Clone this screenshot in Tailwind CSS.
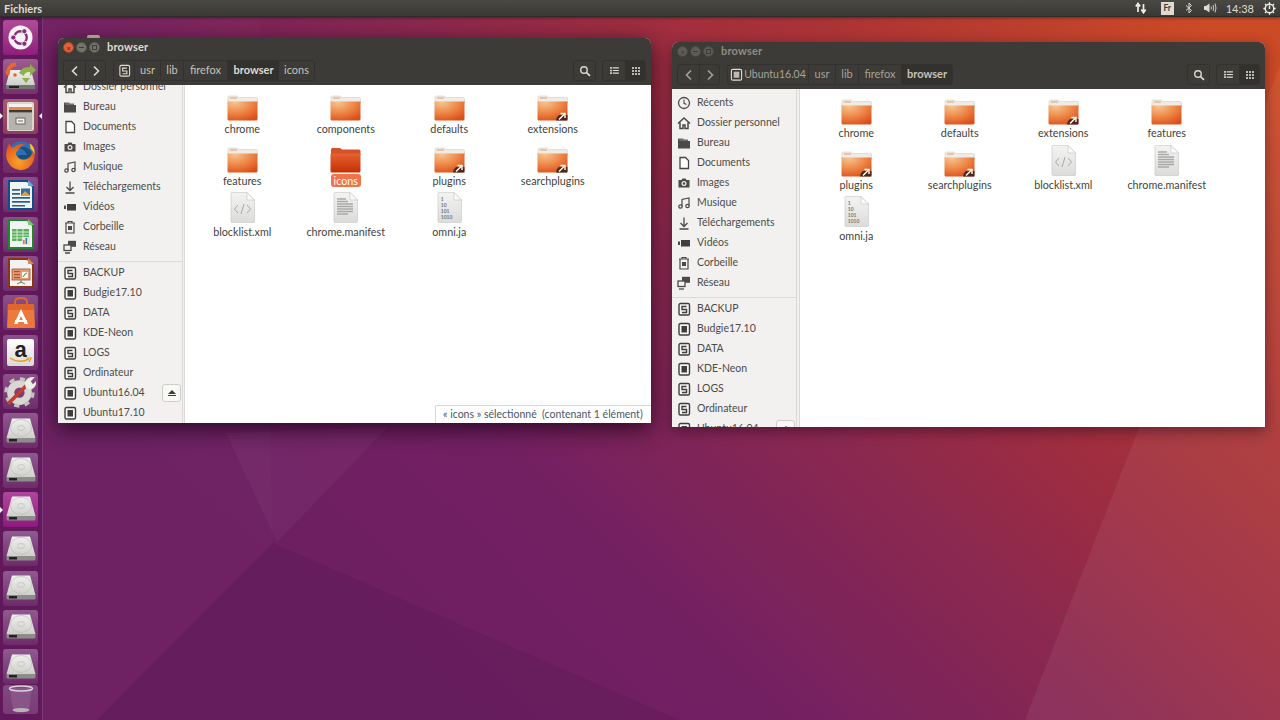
<!DOCTYPE html>
<html lang="fr">
<head>
<meta charset="utf-8">
<title>browser</title>
<script src="https://cdn.jsdelivr.net/npm/@tailwindcss/browser@4"></script>
</head>
<body class="m-0 overflow-hidden">
<svg class="absolute w-0 h-0">
<defs>
<linearGradient id="wp" gradientUnits="userSpaceOnUse" x1="450" y1="760" x2="1180" y2="0">
<stop offset="0" stop-color="#6c1f62"/><stop offset=".25" stop-color="#732062"/><stop offset=".47" stop-color="#8a2850"/><stop offset=".6" stop-color="#9c2c42"/><stop offset=".75" stop-color="#aa3335"/><stop offset="1" stop-color="#cc4a26"/>
</linearGradient>
<radialGradient id="fo" cx=".25" cy=".05" r="1.05"><stop offset="0" stop-color="#f6c48f"/><stop offset=".5" stop-color="#ee8a4a"/><stop offset="1" stop-color="#dc4d18"/></radialGradient>
<linearGradient id="fs" x1="0" y1="0" x2="0" y2="1"><stop offset="0" stop-color="#e5622f"/><stop offset="1" stop-color="#c72f05"/></linearGradient>
<linearGradient id="dk" x1="0" y1="0" x2="0" y2="1"><stop offset="0" stop-color="#f0f0ee"/><stop offset="1" stop-color="#cfcfcc"/></linearGradient>
<linearGradient id="fileg" x1="0" y1="0" x2="0" y2="1"><stop offset="0" stop-color="#f3f3f2"/><stop offset="1" stop-color="#dcdcda"/></linearGradient>
<radialGradient id="ffo" cx=".45" cy=".7" r=".7"><stop offset="0" stop-color="#f9a12a"/><stop offset="1" stop-color="#e2521b"/></radialGradient>

<symbol id="folder" viewBox="0 0 31 26"><path d="M1 2.500Q1 1 2.500 1H10L12 2.500H29Q30.500 2.500 30.500 4V8H1Z" fill="#efece8" stroke="#c9c5c0" stroke-width=".5"/><rect x="3" y="2.500" width="7" height="1" fill="#ef9662"/><path d="M.5 6.500H30.500V24Q30.500 25.500 29 25.500H2Q.5 25.500 .5 24Z" fill="url(#fo)"/></symbol>
<symbol id="folder-sel" viewBox="0 0 31 26"><path d="M1 2.500Q1 1 2.500 1H10L12 2.500H29Q30.500 2.500 30.500 4V8H1Z" fill="#d6512a"/><path d="M.5 6.500H30.500V24Q30.500 25.500 29 25.500H2Q.5 25.500 .5 24Z" fill="url(#fs)"/></symbol>
<symbol id="link" viewBox="0 0 13 10"><path d="M1 9.500Q2 4 5 4H12.500V9.500Z" fill="#2b2520" opacity=".85"/><path d="M4 8.500L9 3.500M5.500 2.500H10V7" stroke="#fff" stroke-width="1.400" fill="none"/></symbol>
<symbol id="file" viewBox="0 0 25 31"><path d="M1 1.500Q1 .5 2 .5H17L24.500 8V29.500Q24.500 30.500 23.500 30.500H2Q1 30.500 1 29.500Z" fill="url(#fileg)" stroke="#c4c4c2" stroke-width=".6"/><path d="M17 .5V8H24.500Z" fill="#fafafa" stroke="#c4c4c2" stroke-width=".6"/></symbol>

<symbol id="i-clock" viewBox="0 0 14 14"><circle cx="7" cy="7" r="5.500" fill="none" stroke="#4a4a48" stroke-width="1.300"/><path d="M7 3.500V7.300L9.500 8.500" fill="none" stroke="#4a4a48" stroke-width="1.100"/></symbol>
<symbol id="i-home" viewBox="0 0 14 14"><path d="M1 7.500L7 2L13 7.500M3 6.500V12.500H6V9H8V12.500H11V6.500" fill="none" stroke="#4a4a48" stroke-width="1.500"/></symbol>
<symbol id="i-folder" viewBox="0 0 14 14"><path d="M1 2.500H6L7 3.500H11V5H1Z" fill="#6f6f6c"/><rect x="2" y="5" width="11" height="7.500" fill="#4a4a48"/><rect x="1" y="3" width="1.200" height="9.500" fill="#4a4a48"/></symbol>
<symbol id="i-doc" viewBox="0 0 14 14"><path d="M3 1.500H8.500L11.500 4.500V12.500H3Z" fill="#fff" stroke="#444" stroke-width="1.300"/></symbol>
<symbol id="i-cam" viewBox="0 0 14 14"><path d="M1.500 4H4.500L5.500 2.500H8.500L9.500 4H12.500V11.500H1.500Z" fill="#4a4a48"/><circle cx="7" cy="7.500" r="2.500" fill="#f2f1f0"/><circle cx="7" cy="7.500" r="1.300" fill="#4a4a48"/></symbol>
<symbol id="i-music" viewBox="0 0 14 14"><path d="M5 10.500V3.500L12 2V9.500" fill="none" stroke="#4a4a48" stroke-width="1.200"/><circle cx="3.500" cy="10.500" r="1.700" fill="none" stroke="#4a4a48" stroke-width="1.200"/><circle cx="10.500" cy="10" r="1.700" fill="none" stroke="#4a4a48" stroke-width="1.200"/></symbol>
<symbol id="i-dl" viewBox="0 0 14 14"><path d="M7 1.500V10M3.500 7L7 10.500L10.500 7M2.500 13H11.500" fill="none" stroke="#4a4a48" stroke-width="1.300"/></symbol>
<symbol id="i-vid" viewBox="0 0 14 14"><rect x="4" y="4" width="9" height="6.500" fill="#3f3f3d"/><path d="M1 5.500H3V9H1Z" fill="#4a4a48"/></symbol>
<symbol id="i-trash" viewBox="0 0 14 14"><path d="M2 3H12M5 3V1.500H9V3M3 3.500V13H11V3.500" fill="none" stroke="#4a4a48" stroke-width="1.200"/><path d="M5 6H9V10H5Z" fill="#4a4a48"/></symbol>
<symbol id="i-net" viewBox="0 0 14 14"><rect x="5" y=".8" width="8" height="6" fill="#4a4a48"/><rect x="1" y="5" width="7" height="5.500" fill="#f2f1f0" stroke="#4a4a48" stroke-width="1.300"/><path d="M2 13H7" stroke="#4a4a48" stroke-width="1.300"/></symbol>
<symbol id="d-s" viewBox="0 0 14 14"><rect x="2" y="1.500" width="10.500" height="11.500" rx="1.500" fill="#f6f6f5" stroke="#3e3e3c" stroke-width="1.400"/><path d="M9.500 4.500H5V7.500H9.500V10.500H5" fill="none" stroke="#3e3e3c" stroke-width="1.400"/></symbol>
<symbol id="d-f" viewBox="0 0 14 14"><rect x="2" y="1.500" width="10.500" height="11.500" rx="1.500" fill="#f6f6f5" stroke="#3e3e3c" stroke-width="1.400"/><rect x="4.500" y="4" width="5.500" height="6.500" fill="#3e3e3c"/></symbol>
<symbol id="t-disk" viewBox="0 0 14 14"><rect x="2" y="1.500" width="10.500" height="11.500" rx="1.500" fill="none" stroke="#dfdbd2" stroke-width="1.200"/><path d="M9.500 4.500H5V7.500H9.500V10.500H5" fill="none" stroke="#dfdbd2" stroke-width="1.200"/></symbol>
<symbol id="t-diskf" viewBox="0 0 14 14"><rect x="1.500" y="1.500" width="11" height="11.500" rx="1.500" fill="none" stroke="#dfdbd2" stroke-width="1.200"/><rect x="4" y="4" width="6" height="6.500" fill="#bdb9b1"/></symbol>
<symbol id="t-back" viewBox="0 0 10 12"><path d="M7 1.500L2.500 6L7 10.500" fill="none" stroke="currentColor" stroke-width="1.600"/></symbol>
<symbol id="t-fwd" viewBox="0 0 10 12"><path d="M3 1.500L7.500 6L3 10.500" fill="none" stroke="currentColor" stroke-width="1.600"/></symbol>
<symbol id="t-search" viewBox="0 0 14 14"><circle cx="5.800" cy="5.800" r="3.800" fill="none" stroke="#dfdbd2" stroke-width="1.600"/><path d="M8.800 8.800L12.800 12.800" stroke="#dfdbd2" stroke-width="2"/></symbol>
<symbol id="t-list" viewBox="0 0 10 8"><path d="M0 0H2V2H0ZM3 .3H10V1.700H3ZM0 3H2V5H0ZM3 3.300H10V4.700H3ZM0 6H2V8H0ZM3 6.300H10V7.700H3Z" fill="#dfdbd2"/></symbol>
<symbol id="t-grid" viewBox="0 0 8 8"><path d="M0 0H2V2H0ZM3 0H5V2H3ZM6 0H8V2H6ZM0 3H2V5H0ZM3 3H5V5H3ZM6 3H8V5H6ZM0 6H2V8H0ZM3 6H5V8H3ZM6 6H8V8H6Z" fill="#bdb9b1"/></symbol>

<symbol id="drive" viewBox="0 0 32 32"><path d="M7 3.500H25L30.500 23H1.500Z" fill="url(#dk)"/><ellipse cx="16" cy="13" rx="10.500" ry="8.500" fill="none" stroke="#bdbdb9" stroke-width=".7"/><ellipse cx="16" cy="13" rx="3.500" ry="2.500" fill="none" stroke="#bdbdb9" stroke-width=".7"/><path d="M1.500 23H30.500V26Q30.500 27.500 29 27.500H3Q1.500 27.500 1.500 26Z" fill="#8d8d8a"/><rect x="4" y="24" width="8" height="2.500" fill="#222"/></symbol>
</defs>
</svg>

<div class="relative w-[1280px] h-[720px] overflow-hidden bg-[#6c1f62] font-['Lato',sans-serif]">
  <!-- wallpaper -->
  <svg class="absolute inset-0 w-[1280px] h-[720px]" viewBox="0 0 1280 720">
    <rect width="1280" height="720" fill="url(#wp)"/>
    <polygon points="1299,17 1280,17 1280,720 1025,720" fill="#ffffff" opacity=".06"/>
    <polygon points="273,543 97,720 680,720" fill="#3f1040" opacity=".13"/>
    <polygon points="226,433 388,427 277,542" fill="#ffffff" opacity=".035"/>
    <polygon points="43,17 260,17 273,543 97,720 43,720" fill="#ffffff" opacity=".015"/>
  </svg>
  <div class="absolute left-[87px] top-[35px] w-[13px] h-[5px] bg-[#cdbfae] rounded-t-[2px]"></div>

  <div class="relative flex flex-col h-[720px]">
    <!-- top bar -->
    <header class="h-[17px] shrink-0 flex items-center bg-linear-to-b from-[#4a4843] to-[#3a3935] text-[#dfdbd2] border-b border-[#2d2c29] shadow-[0_1px_3px_rgba(0,0,0,.4)] z-10">
      <span class="ml-1 text-[11px] leading-none font-bold">Fichiers</span>
      <div class="ml-auto flex items-center">
        <svg class="w-[12px] h-[12px] mr-[14px]" viewBox="0 0 12 12"><path d="M3 10V3M.8 4.500L3 1.500L5.200 4.500" stroke="#f0ede6" stroke-width="1.700" fill="none"/><path d="M8.500 2V10M6.300 7.500L8.500 10.700L10.700 7.500" stroke="#f0ede6" stroke-width="1.700" fill="none"/></svg>
        <span class="w-[13px] h-[13px] mr-[11px] bg-[#dcdad3] text-[#3c3b37] text-[8.500px] font-bold leading-[13px] text-center">Fr</span>
        <svg class="w-[8px] h-[12px] mr-[10px]" viewBox="0 0 8 12"><path d="M1 3.500L6.500 8.500L4 11V1L6.500 3.500L1 8.500" fill="none" stroke="#dfdbd2" stroke-width="1"/></svg>
        <svg class="w-[14px] h-[12px] mr-[9px]" viewBox="0 0 14 12"><path d="M1 4H3L6.500 1.500V10.500L3 8H1Z" fill="#dfdbd2"/><path d="M8 4.500Q9 6 8 7.500M10 3Q11.500 6 10 9M12 1.500Q14 6 12 10.500" fill="none" stroke="#dfdbd2" stroke-width=".9"/></svg>
        <span class="mr-[9px] text-[11px] leading-none">14:38</span>
        <svg class="w-[13px] h-[13px] mr-[4px]" viewBox="0 0 13 13"><circle cx="6.500" cy="6.500" r="4.300" fill="none" stroke="#f0ede6" stroke-width="1.500"/><path d="M6.500 3.500V7" stroke="#f0ede6" stroke-width="1.400"/><path d="M6.500 .3V2M6.500 11V12.700M.3 6.500H2M11 6.500H12.700M2 2L3.200 3.200M9.800 9.800L11 11M11 2L9.800 3.200M3.200 9.800L2 11" stroke="#f0ede6" stroke-width="1.300"/></svg>
      </div>
    </header>

    <div class="flex flex-1 min-h-0">
      <!-- launcher -->
      <nav class="relative w-[43px] shrink-0 bg-[#62195c] border-r border-[#7a3a78] flex flex-col items-center gap-[4.330px] pt-[3px] pr-[1px]">
        <div class="w-[35px] h-[35px] rounded-[3px] flex items-center justify-center bg-linear-to-b from-[#b04c98] to-[#8e1e7c]">
          <svg class="w-[25px] h-[25px]" viewBox="0 0 26 26"><circle cx="13" cy="13" r="12.500" fill="#f6f2f5"/><circle cx="13" cy="13" r="6.500" fill="none" stroke="#8c2a78" stroke-width="2.400"/><circle cx="5.500" cy="13" r="2.700" fill="#8c2a78" stroke="#f6f2f5"/><circle cx="17" cy="6.500" r="2.700" fill="#8c2a78" stroke="#f6f2f5"/><circle cx="17" cy="19.500" r="2.700" fill="#8c2a78" stroke="#f6f2f5"/></svg>
        </div>
        <div class="w-[35px] h-[35px] rounded-[3px] flex items-center justify-center bg-linear-to-b from-[#9a5f8f] to-[#7b2f70]">
          <svg class="w-[33px] h-[33px]" viewBox="0 0 33 33"><path d="M6 10H27L31 25H2Z" fill="url(#dk)"/><path d="M2 25H31V29H2Z" fill="#77756f"/><rect x="5" y="26" width="10" height="2" fill="#222"/><path d="M12 4Q3 6 4 15" fill="none" stroke="#e8682c" stroke-width="3.500"/><circle cx="8" cy="5" r="2" fill="#e8682c"/><circle cx="3" cy="12" r="1.800" fill="#e8682c"/><circle cx="11" cy="15" r="1.800" fill="#e8682c"/><path d="M15 13Q18 6 26 7V4L32 10L26 16V12Q20 12 20 16Z" fill="#8fb04a"/><path d="M18 18H26L22 23Z" fill="#8fb04a"/></svg>
        </div>
        <div class="w-[35px] h-[35px] rounded-[3px] flex items-center justify-center bg-linear-to-b from-[#a55e6d] to-[#8e3f56]">
          <svg class="w-[29px] h-[31px]" viewBox="0 0 29 31"><rect x="1" y="1" width="27" height="29" rx="2" fill="#d9d8d3"/><rect x="3" y="3" width="23" height="3" fill="#f3f2ee"/><rect x="3" y="6" width="23" height="3" fill="#e88a48"/><rect x="3" y="9" width="23" height="2.500" fill="#3e3a36"/><rect x="3" y="12" width="23" height="17" fill="#b4b3ae"/><rect x="10" y="17" width="9" height="6" fill="#f2f1ee" stroke="#6a6964"/><rect x="12" y="19.500" width="5" height="1" fill="#6a6964"/></svg>
        </div>
        <div class="w-[35px] h-[35px] rounded-[3px] flex items-center justify-center bg-linear-to-b from-[#7e4076] to-[#6f2a68]">
          <svg class="w-[33px] h-[33px]" viewBox="0 0 31 31"><circle cx="16" cy="14" r="12" fill="#2d6fb4"/><path d="M15 8Q22 6 26 13Q25 20 18 19Q13 19 13 15H22Q20 11 15 8Z" fill="#17507f"/><path d="M5 4Q6 8 9 8Q13 4 20 5Q14 7 13 11Q10 13 12 16Q15 21 21 19Q26 17 28 10Q31 20 23 27Q15 32 7 26Q-2 17 5 4Z" fill="url(#ffo)"/><path d="M24 4Q29 7 29 14L25 9Z" fill="#f7c02c"/></svg>
        </div>
        <div class="w-[35px] h-[35px] rounded-[3px] flex items-center justify-center bg-linear-to-b from-[#8b4f8a] to-[#6f2f6e]">
          <svg class="w-[28px] h-[32px]" viewBox="0 0 28 32"><path d="M1 1H21L27 7V31H1Z" fill="#0f4f8b"/><path d="M3 3H20L25 8V29H3Z" fill="#f2f3f3"/><path d="M21 1L27 7H21Z" fill="#6aa7d6"/><rect x="5" y="10" width="8" height="1.700" fill="#245d93"/><rect x="5" y="14" width="8" height="1.700" fill="#245d93"/><rect x="5" y="18" width="18" height="1.700" fill="#245d93"/><rect x="5" y="22" width="18" height="1.700" fill="#245d93"/><rect x="5" y="26" width="13" height="1.500" fill="#245d93"/><rect x="14" y="9.500" width="9" height="7" fill="#356f9e"/><path d="M14 16.500L18 12L23 16.500Z" fill="#d8a04c"/></svg>
        </div>
        <div class="w-[35px] h-[35px] rounded-[3px] flex items-center justify-center bg-linear-to-b from-[#8b4f8a] to-[#6f2f6e]">
          <svg class="w-[28px] h-[32px]" viewBox="0 0 28 32"><path d="M1 1H21L27 7V31H1Z" fill="#1c8a2c"/><path d="M3 3H20L25 8V29H3Z" fill="#f2f3f3"/><path d="M21 1L27 7H21Z" fill="#79c96d"/><rect x="5" y="11" width="17" height="12" fill="#57b25a"/><path d="M5 14H22M5 17H22M5 20H22M10 11V23M16 11V23" stroke="#eef7ee" stroke-width=".8"/><rect x="15" y="19" width="8" height="8" fill="#e7e4de"/><rect x="16" y="22" width="1.600" height="4" fill="#d9823a"/><rect x="18.500" y="20" width="1.600" height="6" fill="#3f79b4"/></svg>
        </div>
        <div class="w-[35px] h-[35px] rounded-[3px] flex items-center justify-center bg-linear-to-b from-[#8b4f8a] to-[#6f2f6e]">
          <svg class="w-[28px] h-[32px]" viewBox="0 0 28 32"><path d="M1 1H21L27 7V31H1Z" fill="#8c3515"/><path d="M3 3H20L25 8V29H3Z" fill="#f2f3f3"/><path d="M21 1L27 7H21Z" fill="#d9875b"/><rect x="5" y="12" width="18" height="11" fill="#e89a76" stroke="#a5542c" stroke-width=".8"/><rect x="7" y="14" width="6" height="1.200" fill="#a5542c"/><rect x="7" y="17" width="6" height="1.200" fill="#a5542c"/><rect x="7" y="20" width="6" height="1.200" fill="#a5542c"/><rect x="15" y="15" width="6" height="6" fill="#f5f5f2"/><path d="M16 20L18 17L20 16" stroke="#3c9a44" fill="none"/><path d="M14 23V26M10 27L14 25L18 27" stroke="#777" fill="none"/></svg>
        </div>
        <div class="w-[35px] h-[35px] rounded-[3px] flex items-center justify-center bg-linear-to-b from-[#8b4f8a] to-[#6f2f6e]">
          <svg class="w-[30px] h-[32px]" viewBox="0 0 30 32"><path d="M9 9V5Q9 1 15 1Q21 1 21 5V9" fill="none" stroke="#d96a2e" stroke-width="2"/><path d="M2 7H28L29 30Q29 31 28 31H2Q1 31 1 30Z" fill="#ed7a3c"/><path d="M2 7H28L28.300 13H1.700Z" fill="#df6528"/><path d="M15 12L22 27H18.500L15 19L11.500 27H8Z" fill="#fff"/><path d="M9 23H21V25H9Z" fill="#fff"/></svg>
        </div>
        <div class="w-[35px] h-[35px] rounded-[3px] flex items-center justify-center bg-linear-to-b from-[#8b4f8a] to-[#6f2f6e]">
          <div class="relative w-[27px] h-[27px] bg-linear-to-b from-[#ffffff] to-[#d9d9d9] rounded-[2px] flex items-start justify-center">
            <span class="text-[#222] text-[22px] leading-[21px] font-bold font-['Liberation_Sans',sans-serif]">a</span>
            <svg class="absolute left-[2px] bottom-[2px] w-[23px] h-[7px]" viewBox="0 0 23 7"><path d="M1 1Q10 7 20 2" fill="none" stroke="#f09a1a" stroke-width="1.500"/><path d="M17 1H22L20 5" fill="none" stroke="#f09a1a" stroke-width="1.200"/></svg>
          </div>
        </div>
        <div class="w-[35px] h-[35px] rounded-[3px] flex items-center justify-center bg-linear-to-b from-[#8b4f8a] to-[#6f2f6e]">
          <svg class="w-[33px] h-[33px]" viewBox="0 0 32 32"><circle cx="15" cy="17" r="8.500" fill="none" stroke="#d8d7d2" stroke-width="7"/><circle cx="15" cy="17" r="13" fill="none" stroke="#c4c3be" stroke-width="3.500" stroke-dasharray="5 5.210"/><path d="M5 27L22 10" stroke="#c93a2a" stroke-width="3.500" stroke-linecap="round"/><path d="M20 7Q23 1 30 2L26 6L28 9L31 6Q32 12 26 14Q23 14 21 12Z" fill="#eeede8"/></svg>
        </div>
        <div class="w-[35px] h-[35px] rounded-[3px] flex items-center justify-center bg-linear-to-b from-[#8f5a90] to-[#6e2a6a]"><svg class="w-[32px] h-[32px]"><use href="#drive"/></svg></div>
        <div class="w-[35px] h-[35px] rounded-[3px] flex items-center justify-center bg-linear-to-b from-[#8f5a90] to-[#6e2a6a]"><svg class="w-[32px] h-[32px]"><use href="#drive"/></svg></div>
        <div class="w-[35px] h-[35px] rounded-[3px] flex items-center justify-center bg-linear-to-b from-[#b0459c] to-[#8e1a80]"><svg class="w-[32px] h-[32px]"><use href="#drive"/></svg></div>
        <div class="w-[35px] h-[35px] rounded-[3px] flex items-center justify-center bg-linear-to-b from-[#8f5a90] to-[#6e2a6a]"><svg class="w-[32px] h-[32px]"><use href="#drive"/></svg></div>
        <div class="w-[35px] h-[35px] rounded-[3px] flex items-center justify-center bg-linear-to-b from-[#8f5a90] to-[#6e2a6a]"><svg class="w-[32px] h-[32px]"><use href="#drive"/></svg></div>
        <div class="w-[35px] h-[35px] rounded-[3px] flex items-center justify-center bg-linear-to-b from-[#8f5a90] to-[#6e2a6a]"><svg class="w-[32px] h-[32px]"><use href="#drive"/></svg></div>
        <div class="w-[35px] h-[35px] rounded-[3px] flex items-center justify-center bg-linear-to-b from-[#8f5a90] to-[#6e2a6a]"><svg class="w-[32px] h-[32px]"><use href="#drive"/></svg></div>
        <div class="w-[35px] h-[29px] -mt-[4px] rounded-[3px] flex items-center justify-center bg-linear-to-b from-[#7f4a80] to-[#7b3a78]">
          <svg class="w-[26px] h-[28px]" viewBox="0 0 26 28"><path d="M2 3L5 26Q13 29 21 26L24 3Z" fill="#8c5a8c" opacity=".8"/><ellipse cx="13" cy="3.500" rx="11.500" ry="2.500" fill="none" stroke="#d9d2d8" stroke-width="1.400"/><ellipse cx="13" cy="25" rx="8.500" ry="2" fill="#b9b3b6"/></svg>
        </div>
        <!-- pips -->
        <span class="absolute left-0 top-[96px] w-0 h-0 border-y-[3px] border-y-transparent border-l-[3px] border-l-white"></span>
        <span class="absolute right-0 top-[96px] w-0 h-0 border-y-[3px] border-y-transparent border-r-[3px] border-r-white"></span>
        <span class="absolute left-0 top-[490px] w-0 h-0 border-y-[3px] border-y-transparent border-l-[3px] border-l-white"></span>
      </nav>
    </div>
  </div>

  <!-- WINDOW 1 (focused) -->
  <section class="absolute left-[58px] top-[38px] w-[593px] h-[385px] rounded-t-[6px] overflow-hidden flex flex-col shadow-[0_6px_22px_rgba(20,0,20,.75)] bg-[#f2f1f0]">
    <div class="h-[47px] shrink-0 bg-[#3d3b37] flex flex-col">
      <div class="h-[22px] flex items-center pl-[5px] pb-[3px]">
        <span class="w-[11px] h-[11px] rounded-full bg-[#e0613a] border border-[#a5442a] flex items-center justify-center text-[#5a2412] text-[8px] leading-none">×</span>
        <span class="ml-[2px] w-[11px] h-[11px] rounded-full bg-[#75736c] border border-[#56544e] flex items-center justify-center"><span class="w-[5px] h-[1px] bg-[#3d3b37]"></span></span>
        <span class="ml-[2px] w-[11px] h-[11px] rounded-full bg-[#75736c] border border-[#56544e] flex items-center justify-center"><span class="w-[5px] h-[5px] border border-[#3d3b37]"></span></span>
        <span class="ml-[7px] text-[11px] font-bold tracking-[.2px] text-[#dfdbd2]">browser</span>
      </div>
      <div class="flex items-start pl-[5px] pr-[5px] text-[11px] text-[#c6c2ba]">
        <div class="flex h-[21px] w-[43px] rounded-[3px] border border-[#34322f] text-[#dfdbd2]">
          <span class="w-[22px] border-r border-[#34322f] flex items-center justify-center"><svg class="w-[10px] h-[12px]"><use href="#t-back"/></svg></span>
          <span class="flex-1 flex items-center justify-center"><svg class="w-[10px] h-[12px]"><use href="#t-fwd"/></svg></span>
        </div>
        <div class="ml-[7px] flex h-[21px] rounded-[3px] border border-[#34322f]">
          <span class="w-[21px] flex items-center justify-center border-r border-[#34322f]"><svg class="w-[13px] h-[13px]"><use href="#t-disk"/></svg></span>
          <span class="w-[26px] flex items-center justify-center border-r border-[#34322f]">usr</span>
          <span class="w-[23px] flex items-center justify-center border-r border-[#34322f]">lib</span>
          <span class="w-[44px] flex items-center justify-center border-r border-[#34322f]">firefox</span>
          <span class="w-[51px] flex items-center justify-center bg-[#33312e] font-bold text-[#dfdbd2]">browser</span>
          <span class="w-[35px] flex items-center justify-center">icons</span>
        </div>
        <span class="ml-auto w-[23px] h-[21px] rounded-[3px] border border-[#34322f] flex items-center justify-center"><svg class="w-[12px] h-[12px]"><use href="#t-search"/></svg></span>
        <div class="ml-[6px] flex h-[21px] w-[44px] rounded-[3px] border border-[#34322f]">
          <span class="w-[22px] flex items-center justify-center"><svg class="w-[9px] h-[7px]"><use href="#t-list"/></svg></span>
          <span class="flex-1 bg-[#33312e] border-l border-[#34322f] flex items-center justify-center"><svg class="w-[8px] h-[8px]"><use href="#t-grid"/></svg></span>
        </div>
      </div>
    </div>
    <div class="flex-1 min-h-0 flex relative">
      <aside class="w-[125px] shrink-0 overflow-hidden bg-[#f2f1f0] border-r border-[#dbd9d5] text-[10.500px] text-[#4c4c4a]">
        <div class="-mt-[8px]">
          <div class="h-[20px] flex items-center pl-[5px] gap-[6px]"><svg class="w-[14px] h-[14px]"><use href="#i-home"/></svg>Dossier personnel</div>
          <div class="h-[20px] flex items-center pl-[5px] gap-[6px]"><svg class="w-[14px] h-[14px]"><use href="#i-folder"/></svg>Bureau</div>
          <div class="h-[20px] flex items-center pl-[5px] gap-[6px]"><svg class="w-[14px] h-[14px]"><use href="#i-doc"/></svg>Documents</div>
          <div class="h-[20px] flex items-center pl-[5px] gap-[6px]"><svg class="w-[14px] h-[14px]"><use href="#i-cam"/></svg>Images</div>
          <div class="h-[20px] flex items-center pl-[5px] gap-[6px]"><svg class="w-[14px] h-[14px]"><use href="#i-music"/></svg>Musique</div>
          <div class="h-[20px] flex items-center pl-[5px] gap-[6px]"><svg class="w-[14px] h-[14px]"><use href="#i-dl"/></svg>Téléchargements</div>
          <div class="h-[20px] flex items-center pl-[5px] gap-[6px]"><svg class="w-[14px] h-[14px]"><use href="#i-vid"/></svg>Vidéos</div>
          <div class="h-[20px] flex items-center pl-[5px] gap-[6px]"><svg class="w-[14px] h-[14px]"><use href="#i-trash"/></svg>Corbeille</div>
          <div class="h-[20px] flex items-center pl-[5px] gap-[6px]"><svg class="w-[14px] h-[14px]"><use href="#i-net"/></svg>Réseau</div>
          <div class="h-[5px] mb-[1px] border-b border-[#dcdad6]"></div>
          <div class="h-[20px] flex items-center pl-[5px] gap-[6px]"><svg class="w-[14px] h-[14px]"><use href="#d-s"/></svg>BACKUP</div>
          <div class="h-[20px] flex items-center pl-[5px] gap-[6px]"><svg class="w-[14px] h-[14px]"><use href="#d-f"/></svg>Budgie17.10</div>
          <div class="h-[20px] flex items-center pl-[5px] gap-[6px]"><svg class="w-[14px] h-[14px]"><use href="#d-s"/></svg>DATA</div>
          <div class="h-[20px] flex items-center pl-[5px] gap-[6px]"><svg class="w-[14px] h-[14px]"><use href="#d-f"/></svg>KDE-Neon</div>
          <div class="h-[20px] flex items-center pl-[5px] gap-[6px]"><svg class="w-[14px] h-[14px]"><use href="#d-s"/></svg>LOGS</div>
          <div class="h-[20px] flex items-center pl-[5px] gap-[6px]"><svg class="w-[14px] h-[14px]"><use href="#d-s"/></svg>Ordinateur</div>
          <div class="h-[20px] flex items-center pl-[5px] gap-[6px]"><svg class="w-[14px] h-[14px]"><use href="#d-f"/></svg>Ubuntu16.04<span class="ml-auto mr-[1px] w-[19px] h-[18px] bg-[#f8f8f7] border border-[#cfcdc8] rounded-[3px] flex flex-col items-center justify-center gap-[1px]"><span class="w-0 h-0 border-x-[4px] border-x-transparent border-b-[4px] border-b-[#3c3c3c]"></span><span class="w-[8px] h-[1.500px] bg-[#3c3c3c]"></span></span></div>
          <div class="h-[20px] flex items-center pl-[5px] gap-[6px]"><svg class="w-[14px] h-[14px]"><use href="#d-f"/></svg>Ubuntu17.10</div>
        </div>
      </aside>
      <div class="w-[2px] bg-[#f2f1f0] border-r border-[#dbd9d5]"></div>
      <main class="flex-1 bg-white pl-[5.500px] pt-[10px] text-[10.750px] text-[#3f3f3d]">
        <div class="grid grid-cols-[repeat(4,103.500px)] auto-rows-[51.500px]">
          <figure class="flex flex-col items-center"><svg class="w-[31px] h-[26px]"><use href="#folder"/></svg><figcaption class="mt-[1px] leading-[14px]">chrome</figcaption></figure>
          <figure class="flex flex-col items-center"><svg class="w-[31px] h-[26px]"><use href="#folder"/></svg><figcaption class="mt-[1px] leading-[14px]">components</figcaption></figure>
          <figure class="flex flex-col items-center"><svg class="w-[31px] h-[26px]"><use href="#folder"/></svg><figcaption class="mt-[1px] leading-[14px]">defaults</figcaption></figure>
          <figure class="flex flex-col items-center"><div class="relative w-[31px] h-[26px]"><svg class="w-[31px] h-[26px]"><use href="#folder"/></svg><svg class="absolute right-0 bottom-0 w-[13px] h-[10px]"><use href="#link"/></svg></div><figcaption class="mt-[1px] leading-[14px]">extensions</figcaption></figure>
          <figure class="flex flex-col items-center"><svg class="w-[31px] h-[26px]"><use href="#folder"/></svg><figcaption class="mt-[1px] leading-[14px]">features</figcaption></figure>
          <figure class="flex flex-col items-center"><svg class="w-[31px] h-[26px]"><use href="#folder-sel"/></svg><figcaption class="mt-[1px] leading-[13px] px-[3px] bg-[#f0734a] rounded-[3px] text-white">icons</figcaption></figure>
          <figure class="flex flex-col items-center"><div class="relative w-[31px] h-[26px]"><svg class="w-[31px] h-[26px]"><use href="#folder"/></svg><svg class="absolute right-0 bottom-0 w-[13px] h-[10px]"><use href="#link"/></svg></div><figcaption class="mt-[1px] leading-[14px]">plugins</figcaption></figure>
          <figure class="flex flex-col items-center"><div class="relative w-[31px] h-[26px]"><svg class="w-[31px] h-[26px]"><use href="#folder"/></svg><svg class="absolute right-0 bottom-0 w-[13px] h-[10px]"><use href="#link"/></svg></div><figcaption class="mt-[1px] leading-[14px]">searchplugins</figcaption></figure>
          <figure class="flex flex-col items-center -mt-[6px]"><div class="relative w-[25px] h-[31px]"><svg class="w-[25px] h-[31px]"><use href="#file"/></svg><svg class="absolute left-[3px] top-[10px] w-[19px] h-[14px]" viewBox="0 0 19 14"><path d="M5 3L1.500 7L5 11M14 3L17.500 7L14 11M11 2L8 12" fill="none" stroke="#a9a9a7" stroke-width="1"/></svg></div><figcaption class="mt-[2px] leading-[14px]">blocklist.xml</figcaption></figure>
          <figure class="flex flex-col items-center -mt-[6px]"><div class="relative w-[25px] h-[31px]"><svg class="w-[25px] h-[31px]"><use href="#file"/></svg><svg class="absolute left-[3px] top-[6px] w-[18px] h-[20px]" viewBox="0 0 18 20"><path d="M1 1H10M1 3.500H12M1 6H17M1 8.500H17M1 11H17M1 13.500H17M1 16H12" stroke="#a9a9a7" stroke-width="1.300"/></svg></div><figcaption class="mt-[2px] leading-[14px]">chrome.manifest</figcaption></figure>
          <figure class="flex flex-col items-center -mt-[6px]"><div class="relative w-[25px] h-[31px]"><svg class="w-[25px] h-[31px]"><use href="#file"/></svg><div class="absolute left-[4px] top-[4px] text-[5px] font-bold leading-[6px] text-[#777]">1<br>10<br>101<br>1010</div></div><figcaption class="mt-[2px] leading-[14px]">omni.ja</figcaption></figure>
        </div>
      </main>
      <div class="absolute right-0 bottom-0 w-[216px] h-[18px] bg-white border-t border-l border-[#d9d7d3] rounded-tl-[2px] pl-[7px] text-[10.500px] leading-[17px] text-[#4a5666] whitespace-pre">« icons » sélectionné  (contenant 1 élément)</div>
    </div>
  </section>

  <!-- WINDOW 2 (unfocused) -->
  <section class="absolute left-[672px] top-[42px] w-[593px] h-[385px] rounded-t-[6px] overflow-hidden flex flex-col shadow-[0_4px_14px_rgba(20,0,20,.45)] bg-[#f2f1f0]">
    <div class="h-[47px] shrink-0 bg-[#3d3b37] flex flex-col">
      <div class="h-[22px] flex items-center pl-[5px] pb-[3px]">
        <span class="w-[11px] h-[11px] rounded-full bg-[#5e5c56] border border-[#4a4843] flex items-center justify-center text-[#3d3b37] text-[8px] leading-none">×</span>
        <span class="ml-[2px] w-[11px] h-[11px] rounded-full bg-[#5e5c56] border border-[#4a4843] flex items-center justify-center"><span class="w-[5px] h-[1px] bg-[#3d3b37]"></span></span>
        <span class="ml-[2px] w-[11px] h-[11px] rounded-full bg-[#5e5c56] border border-[#4a4843] flex items-center justify-center"><span class="w-[5px] h-[5px] border border-[#3d3b37]"></span></span>
        <span class="ml-[7px] text-[11px] font-bold tracking-[.2px] text-[#8f8c85]">browser</span>
      </div>
      <div class="flex items-start pl-[5px] pr-[5px] text-[11px] text-[#a5a29a]">
        <div class="flex h-[21px] w-[43px] rounded-[3px] border border-[#34322f] text-[#a5a29a]">
          <span class="w-[22px] border-r border-[#34322f] flex items-center justify-center"><svg class="w-[10px] h-[12px]"><use href="#t-back"/></svg></span>
          <span class="flex-1 flex items-center justify-center"><svg class="w-[10px] h-[12px]"><use href="#t-fwd"/></svg></span>
        </div>
        <div class="ml-[7px] flex h-[21px] rounded-[3px] border border-[#34322f]">
          <span class="w-[81px] flex items-center justify-center gap-[1px] border-r border-[#34322f] text-[10.500px]"><svg class="w-[13px] h-[13px]"><use href="#t-diskf"/></svg>Ubuntu16.04</span>
          <span class="w-[27px] flex items-center justify-center border-r border-[#34322f]">usr</span>
          <span class="w-[23px] flex items-center justify-center border-r border-[#34322f]">lib</span>
          <span class="w-[43px] flex items-center justify-center border-r border-[#34322f]">firefox</span>
          <span class="w-[50px] flex items-center justify-center bg-[#33312e] font-bold text-[#c6c2ba]">browser</span>
        </div>
        <span class="ml-auto w-[23px] h-[21px] rounded-[3px] border border-[#34322f] flex items-center justify-center"><svg class="w-[12px] h-[12px]"><use href="#t-search"/></svg></span>
        <div class="ml-[6px] flex h-[21px] w-[44px] rounded-[3px] border border-[#34322f]">
          <span class="w-[22px] flex items-center justify-center"><svg class="w-[9px] h-[7px]"><use href="#t-list"/></svg></span>
          <span class="flex-1 bg-[#33312e] border-l border-[#34322f] flex items-center justify-center"><svg class="w-[8px] h-[8px]"><use href="#t-grid"/></svg></span>
        </div>
      </div>
    </div>
    <div class="flex-1 min-h-0 flex">
      <aside class="w-[125px] shrink-0 overflow-hidden bg-[#f2f1f0] border-r border-[#dbd9d5] text-[10.500px] text-[#4c4c4a] pt-[4px]">
        <div class="h-[20px] flex items-center pl-[5px] gap-[6px]"><svg class="w-[14px] h-[14px]"><use href="#i-clock"/></svg>Récents</div>
        <div class="h-[20px] flex items-center pl-[5px] gap-[6px]"><svg class="w-[14px] h-[14px]"><use href="#i-home"/></svg>Dossier personnel</div>
        <div class="h-[20px] flex items-center pl-[5px] gap-[6px]"><svg class="w-[14px] h-[14px]"><use href="#i-folder"/></svg>Bureau</div>
        <div class="h-[20px] flex items-center pl-[5px] gap-[6px]"><svg class="w-[14px] h-[14px]"><use href="#i-doc"/></svg>Documents</div>
        <div class="h-[20px] flex items-center pl-[5px] gap-[6px]"><svg class="w-[14px] h-[14px]"><use href="#i-cam"/></svg>Images</div>
        <div class="h-[20px] flex items-center pl-[5px] gap-[6px]"><svg class="w-[14px] h-[14px]"><use href="#i-music"/></svg>Musique</div>
        <div class="h-[20px] flex items-center pl-[5px] gap-[6px]"><svg class="w-[14px] h-[14px]"><use href="#i-dl"/></svg>Téléchargements</div>
        <div class="h-[20px] flex items-center pl-[5px] gap-[6px]"><svg class="w-[14px] h-[14px]"><use href="#i-vid"/></svg>Vidéos</div>
        <div class="h-[20px] flex items-center pl-[5px] gap-[6px]"><svg class="w-[14px] h-[14px]"><use href="#i-trash"/></svg>Corbeille</div>
        <div class="h-[20px] flex items-center pl-[5px] gap-[6px]"><svg class="w-[14px] h-[14px]"><use href="#i-net"/></svg>Réseau</div>
        <div class="h-[5px] mb-[1px] border-b border-[#dcdad6]"></div>
        <div class="h-[20px] flex items-center pl-[5px] gap-[6px]"><svg class="w-[14px] h-[14px]"><use href="#d-s"/></svg>BACKUP</div>
        <div class="h-[20px] flex items-center pl-[5px] gap-[6px]"><svg class="w-[14px] h-[14px]"><use href="#d-f"/></svg>Budgie17.10</div>
        <div class="h-[20px] flex items-center pl-[5px] gap-[6px]"><svg class="w-[14px] h-[14px]"><use href="#d-s"/></svg>DATA</div>
        <div class="h-[20px] flex items-center pl-[5px] gap-[6px]"><svg class="w-[14px] h-[14px]"><use href="#d-f"/></svg>KDE-Neon</div>
        <div class="h-[20px] flex items-center pl-[5px] gap-[6px]"><svg class="w-[14px] h-[14px]"><use href="#d-s"/></svg>LOGS</div>
        <div class="h-[20px] flex items-center pl-[5px] gap-[6px]"><svg class="w-[14px] h-[14px]"><use href="#d-s"/></svg>Ordinateur</div>
        <div class="h-[20px] flex items-center pl-[5px] gap-[6px]"><svg class="w-[14px] h-[14px]"><use href="#d-f"/></svg>Ubuntu16.04<span class="ml-auto mr-[1px] w-[19px] h-[18px] bg-[#f8f8f7] border border-[#cfcdc8] rounded-[3px] flex flex-col items-center justify-center gap-[1px]"><span class="w-0 h-0 border-x-[4px] border-x-transparent border-b-[4px] border-b-[#3c3c3c]"></span><span class="w-[8px] h-[1.500px] bg-[#3c3c3c]"></span></span></div>
      </aside>
      <div class="w-[3px] bg-[#f2f1f0] border-r border-[#dbd9d5]"></div>
      <main class="flex-1 bg-white pl-[4.500px] pt-[10px] text-[10.750px] text-[#3f3f3d]">
        <div class="grid grid-cols-[repeat(4,103.500px)] auto-rows-[51.500px]">
          <figure class="flex flex-col items-center"><svg class="w-[31px] h-[26px]"><use href="#folder"/></svg><figcaption class="mt-[1px] leading-[14px]">chrome</figcaption></figure>
          <figure class="flex flex-col items-center"><svg class="w-[31px] h-[26px]"><use href="#folder"/></svg><figcaption class="mt-[1px] leading-[14px]">defaults</figcaption></figure>
          <figure class="flex flex-col items-center"><div class="relative w-[31px] h-[26px]"><svg class="w-[31px] h-[26px]"><use href="#folder"/></svg><svg class="absolute right-0 bottom-0 w-[13px] h-[10px]"><use href="#link"/></svg></div><figcaption class="mt-[1px] leading-[14px]">extensions</figcaption></figure>
          <figure class="flex flex-col items-center"><svg class="w-[31px] h-[26px]"><use href="#folder"/></svg><figcaption class="mt-[1px] leading-[14px]">features</figcaption></figure>
          <figure class="flex flex-col items-center"><div class="relative w-[31px] h-[26px]"><svg class="w-[31px] h-[26px]"><use href="#folder"/></svg><svg class="absolute right-0 bottom-0 w-[13px] h-[10px]"><use href="#link"/></svg></div><figcaption class="mt-[1px] leading-[14px]">plugins</figcaption></figure>
          <figure class="flex flex-col items-center"><div class="relative w-[31px] h-[26px]"><svg class="w-[31px] h-[26px]"><use href="#folder"/></svg><svg class="absolute right-0 bottom-0 w-[13px] h-[10px]"><use href="#link"/></svg></div><figcaption class="mt-[1px] leading-[14px]">searchplugins</figcaption></figure>
          <figure class="flex flex-col items-center -mt-[6px]"><div class="relative w-[25px] h-[31px]"><svg class="w-[25px] h-[31px]"><use href="#file"/></svg><svg class="absolute left-[3px] top-[10px] w-[19px] h-[14px]" viewBox="0 0 19 14"><path d="M5 3L1.500 7L5 11M14 3L17.500 7L14 11M11 2L8 12" fill="none" stroke="#a9a9a7" stroke-width="1"/></svg></div><figcaption class="mt-[2px] leading-[14px]">blocklist.xml</figcaption></figure>
          <figure class="flex flex-col items-center -mt-[6px]"><div class="relative w-[25px] h-[31px]"><svg class="w-[25px] h-[31px]"><use href="#file"/></svg><svg class="absolute left-[3px] top-[6px] w-[18px] h-[20px]" viewBox="0 0 18 20"><path d="M1 1H10M1 3.500H12M1 6H17M1 8.500H17M1 11H17M1 13.500H17M1 16H12" stroke="#a9a9a7" stroke-width="1.300"/></svg></div><figcaption class="mt-[2px] leading-[14px]">chrome.manifest</figcaption></figure>
          <figure class="flex flex-col items-center -mt-[6px]"><div class="relative w-[25px] h-[31px]"><svg class="w-[25px] h-[31px]"><use href="#file"/></svg><div class="absolute left-[4px] top-[4px] text-[5px] font-bold leading-[6px] text-[#777]">1<br>10<br>101<br>1010</div></div><figcaption class="mt-[2px] leading-[14px]">omni.ja</figcaption></figure>
        </div>
      </main>
    </div>
  </section>
</div>
</body>
</html>
